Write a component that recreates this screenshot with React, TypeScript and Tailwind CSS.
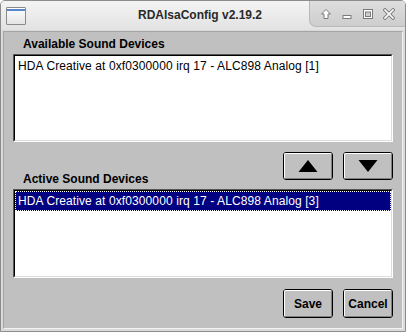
import React from "react";

const font = { fontFamily: '"Liberation Sans", Arial, sans-serif' };

function ListBox({ children, h }: { children?: React.ReactNode; h: string }) {
  return (
    <div className={`border border-t-[#555] border-l-[#555] border-b-white border-r-white ${h}`}>
      <div className="h-full border border-t-black border-l-black border-b-[#dcdcdc] border-r-[#dcdcdc] bg-white">
        {children}
      </div>
    </div>
  );
}

function Btn({ children, className = "" }: { children: React.ReactNode; className?: string }) {
  return (
    <div className={`border border-black rounded-[3px] bg-[#c0c0c0] ${className}`}>
      <div className="h-full w-full border border-t-white border-l-white border-b-[#808080] border-r-[#808080] rounded-[2px] flex items-center justify-center">
        {children}
      </div>
    </div>
  );
}

export default function App() {
  return (
    <div className="w-[406px] h-[332px] flex flex-col bg-[#dadada] border border-[#8c8c8c] rounded-t-[5px] overflow-hidden" style={font}>
      {/* Title bar */}
      <div className="h-[29px] flex items-stretch bg-gradient-to-b from-[#f4f4f4] to-[#e2e2e2] shrink-0">
        <div className="w-[30px] flex items-center pl-[5px]">
          <div className="w-[20px] h-[18px] border border-[#8a8a8a] bg-gradient-to-b from-white to-[#e4e4e4] rounded-[1px]">
            <div className="h-[2px] mt-[1px] bg-[#5a86c8]" />
          </div>
        </div>
        <div className="flex-1 flex items-center justify-center text-[12px] font-bold text-[#2a2a2a] pl-[60px] pb-[1px]">
          RDAlsaConfig v2.19.2
        </div>
        <div className="w-[96px] h-[26px] bg-gradient-to-b from-[#dedede] to-[#cdcdcd] rounded-bl-[7px] border-l border-b border-[#b8b8b8] flex items-center justify-around px-[6px]">
          <svg width="12" height="12" viewBox="0 0 12 12">
            <path d="M6 1.5 L10.5 6 L8 6 L8 10.5 L4 10.5 L4 6 L1.5 6 Z" fill="white" stroke="#7a7a7a" strokeWidth="1" />
          </svg>
          <svg width="12" height="12" viewBox="0 0 12 12">
            <rect x="2" y="7.5" width="8" height="3" fill="white" stroke="#7a7a7a" />
          </svg>
          <svg width="12" height="12" viewBox="0 0 12 12">
            <rect x="1.5" y="1.5" width="9" height="9" fill="white" stroke="#7a7a7a" />
            <rect x="3.5" y="4" width="5" height="4.5" fill="#cfcfcf" stroke="#7a7a7a" />
          </svg>
          <svg width="12" height="12" viewBox="0 0 12 12">
            <path d="M2 2 L10 10 M10 2 L2 10" stroke="#7a7a7a" strokeWidth="3.4" strokeLinecap="square" />
            <path d="M2 2 L10 10 M10 2 L2 10" stroke="white" strokeWidth="1.6" strokeLinecap="square" />
          </svg>
        </div>
      </div>

      {/* Content */}
      <div className="flex-1 mx-[2px] mb-[2px] mt-[1px] bg-[#c0c0c0] border border-t-[#a4a4a4] border-l-[#a4a4a4] border-b-[#f2f2f2] border-r-[#f2f2f2] px-[9px] flex flex-col">
        <div className="mt-[5px] h-[14px] leading-[14px] text-[12px] font-bold text-black pl-[10px]">
          Available Sound Devices
        </div>
        <div className="mt-[3px]">
          <ListBox h="h-[88px]">
            <div className="h-[20px] leading-[20px] text-[12px] tracking-[0.1px] text-black pl-[3px]">
              HDA Creative at 0xf0300000 irq 17 - ALC898 Analog [1]
            </div>
          </ListBox>
        </div>
        <div className="mt-[10px] h-[34px] flex justify-between">
          <div className="self-end h-[14px] leading-[14px] text-[12px] font-bold text-black pl-[10px]">
            Active Sound Devices
          </div>
          <div className="flex gap-[10px] items-start">
            <Btn className="w-[50px] h-[28px]">
              <svg width="20" height="12" viewBox="0 0 20 12">
                <path d="M10 0 L19.5 12 L0.5 12 Z" fill="black" />
              </svg>
            </Btn>
            <Btn className="w-[50px] h-[28px]">
              <svg width="20" height="12" viewBox="0 0 20 12">
                <path d="M0.5 0 L19.5 0 L10 12 Z" fill="black" />
              </svg>
            </Btn>
          </div>
        </div>
        <div className="mt-[3px]">
          <ListBox h="h-[89px]">
            <div className="h-[20px] bg-[#000080] border border-dotted border-white leading-[18px] text-[12px] tracking-[0.1px] text-white pl-[2px]">
              HDA Creative at 0xf0300000 irq 17 - ALC898 Analog [3]
            </div>
          </ListBox>
        </div>
        <div className="mt-[11px] flex justify-end gap-[10px]">
          <Btn className="w-[50px] h-[29px]">
            <span className="text-[12px] font-bold text-black">Save</span>
          </Btn>
          <Btn className="w-[50px] h-[29px]">
            <span className="text-[12px] font-bold text-black">Cancel</span>
          </Btn>
        </div>
      </div>
    </div>
  );
}
